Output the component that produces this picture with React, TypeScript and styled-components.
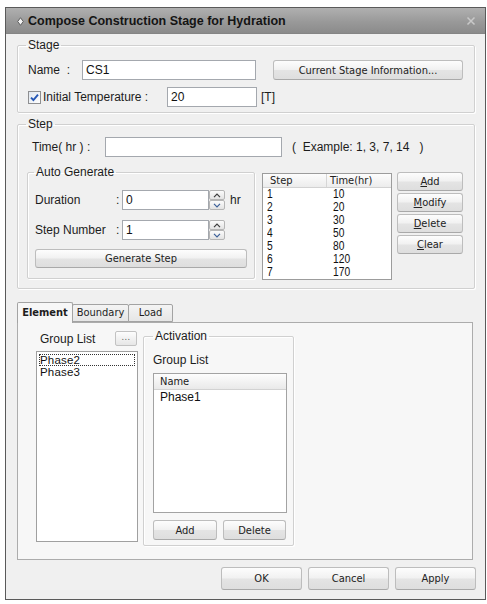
import React from "react";
import styled, { createGlobalStyle } from "styled-components";

const UI = `"DejaVu Sans Condensed", "Liberation Sans", Arial, sans-serif`;
const LABEL = `"Liberation Sans", Arial, sans-serif`;

const GlobalStyle = createGlobalStyle`
  html, body { margin: 0; padding: 0; background: #ffffff; }
  body { font-family: ${LABEL}; }
  * { box-sizing: border-box; }
`;

const Window = styled.div`
  margin: 7px 0 0 5px;
  width: 481px;
  border: 1px solid #5a5a5a;
  background: #f0f0f0;
  display: flex;
  flex-direction: column;
`;

const TitleBar = styled.div`
  height: 26px;
  display: flex;
  align-items: center;
  gap: 4px;
  padding: 1px 9px 0 11px;
  background: linear-gradient(#b0b0b0, #999999 55%, #8b8b8b);
  border-bottom: 1px solid #858585;
`;

const Title = styled.span`
  flex: 1;
  font: bold 12.5px/14px ${LABEL};
  color: #141414;
`;

const Body = styled.div`
  display: flex;
  flex-direction: column;
  padding: 4px 10px 9px 11px;
`;

const Group = styled.fieldset<{ $pad: string; $mt?: number; $w?: number; $ml?: number }>`
  margin: ${(p) => p.$mt ?? 0}px 0 0 ${(p) => p.$ml ?? 0}px;
  min-width: 0;
  flex: none;
  width: ${(p) => (p.$w ? `${p.$w}px` : "auto")};
  padding: ${(p) => p.$pad};
  border: 1px solid #d0d0d0;
  border-radius: 2px;
  box-shadow: 1px 1px 0 #ffffff, inset 1px 1px 0 #ffffff;
`;

const Legend = styled.legend`
  padding: 0 2px;
  font: 12px/14px ${LABEL};
  color: #1c1c1c;
`;

const Row = styled.div<{ $mt?: number; $ml?: number }>`
  display: flex;
  align-items: center;
  height: 20px;
  margin: ${(p) => p.$mt ?? 0}px 0 0 ${(p) => p.$ml ?? 0}px;
`;

const Label = styled.span<{ $w?: number; $ml?: number }>`
  flex: none;
  width: ${(p) => (p.$w ? `${p.$w}px` : "auto")};
  margin-left: ${(p) => p.$ml ?? 0}px;
  font: 12px/14px ${LABEL};
  color: #1c1c1c;
  white-space: pre;
`;

const TextBox = styled.input<{ $w: number }>`
  flex: none;
  width: ${(p) => p.$w}px;
  height: 20px;
  margin: 0;
  padding: 0 0 0 3px;
  border: 1px solid #a4a8ae;
  background: #ffffff;
  font: 12px ${LABEL};
  color: #111111;
  outline: none;
`;

const Button = styled.button<{ $w: number; $h?: number; $ml?: number; $mt?: number }>`
  flex: none;
  width: ${(p) => p.$w}px;
  height: ${(p) => p.$h ?? 20}px;
  margin: ${(p) => p.$mt ?? 0}px 0 0 ${(p) => p.$ml ?? 0}px;
  padding: 0;
  border: 1px solid #bdbdbd;
  border-bottom-color: #a9a9a9;
  border-radius: 3px;
  background: linear-gradient(#fdfdfd, #f1f1f1 48%, #e4e4e4 52%, #dedede);
  font: 11px ${UI};
  color: #222222;
  u { text-decoration: underline; }
`;

const AutoRow = styled.div`
  display: flex;
  align-items: flex-start;
  margin-top: 8px;
`;

const SpinBox = styled.div`
  flex: none;
  width: 16px;
  height: 20px;
  display: flex;
  flex-direction: column;
`;

const SpinHalf = styled.div`
  height: 10px;
  border: 1px solid #b5b5b5;
  border-radius: 2px;
  background: linear-gradient(#fbfbfb, #e3e3e3);
  display: flex;
  align-items: center;
  justify-content: center;
`;

const StepTable = styled.div`
  flex: none;
  margin: 8px 0 0 7px;
  width: 130px;
  height: 107px;
  border: 1px solid #9c9c9c;
  background: #ffffff;
  display: flex;
  flex-direction: column;
`;

const TableHead = styled.div`
  display: flex;
  height: 14px;
  background: linear-gradient(#fdfdfd, #ececec);
  border-bottom: 1px solid #d2d2d2;
`;

const HeadCell = styled.div<{ $w?: number; $pl: number }>`
  flex: ${(p) => (p.$w ? "none" : "1")};
  width: ${(p) => (p.$w ? `${p.$w}px` : "auto")};
  padding-left: ${(p) => p.$pl}px;
  font: 11px/13px ${UI};
  color: #222222;
  border-right: ${(p) => (p.$w ? "1px solid #d6d6d6" : "none")};
`;

const TableRow = styled.div`
  display: flex;
  height: 13px;
  color: #111111;
`;

const Cell = styled.div<{ $w?: number; $pl: number }>`
  flex: ${(p) => (p.$w ? "none" : "1")};
  width: ${(p) => (p.$w ? `${p.$w}px` : "auto")};
  height: 13px;
  padding-left: ${(p) => p.$pl}px;
`;

/* tall, narrow figures of the step grid */
const NarrowText = styled.div`
  font: 12.5px/13px ${LABEL};
  white-space: nowrap;
  transform: scale(0.82, 1);
  transform-origin: 0 50%;
`;

const SideButtons = styled.div`
  flex: none;
  margin: 7px 0 0 5px;
  display: flex;
  flex-direction: column;
  gap: 2px;
`;

const TabStrip = styled.div`
  display: flex;
  align-items: flex-end;
  height: 20px;
  margin-top: 13px;
`;

const Tab = styled.div<{ $w: number; $active?: boolean }>`
  position: relative;
  z-index: ${(p) => (p.$active ? 2 : 1)};
  flex: none;
  width: ${(p) => p.$w}px;
  height: ${(p) => (p.$active ? 21 : 18)}px;
  margin: 0 0 ${(p) => (p.$active ? -1 : 0)}px ${(p) => (p.$active ? 0 : -1)}px;
  border: 1px solid #a3a3a3;
  border-bottom: ${(p) => (p.$active ? "none" : "1px solid #a3a3a3")};
  border-radius: 2px 2px 0 0;
  background: ${(p) => (p.$active ? "#f7f7f7" : "linear-gradient(#f4f4f4, #e6e6e6)")};
  font: ${(p) => (p.$active ? "bold" : "normal")} 11px/${(p) => (p.$active ? 19 : 16)}px ${UI};
  color: #1e1e1e;
  text-align: center;
`;

const TabPanel = styled.div`
  display: flex;
  align-items: flex-start;
  gap: 5px;
  margin-right: 2px;
  padding: 6px 0 13px 18px;
  border: 1px solid #acacac;
  background: #f7f7f7;
`;

const GroupColumn = styled.div`
  flex: none;
  width: 102px;
  margin-top: 2px;
  display: flex;
  flex-direction: column;
`;

const ColumnHead = styled.div`
  display: flex;
  align-items: flex-end;
  justify-content: space-between;
  height: 15px;
`;

const MoreButton = styled.button`
  width: 22px;
  height: 15px;
  margin: 0 1px 0 0;
  padding: 0 0 3px;
  border: 1px solid #c2c2c2;
  border-radius: 2px;
  background: linear-gradient(#fdfdfd, #e6e6e6);
  font: 9px/8px ${UI};
  color: #5a5a5a;
  letter-spacing: 0.5px;
`;

const ListBox = styled.div<{ $h: number }>`
  margin-top: 5px;
  height: ${(p) => p.$h}px;
  padding: 2px 2px 0 2px;
  border: 1px solid #a0a0a0;
  background: #ffffff;
`;

const ListItem = styled.div<{ $focused?: boolean }>`
  height: 12px;
  padding-left: 1px;
  font: 11.5px/12px ${LABEL};
  letter-spacing: 0.2px;
  color: #111111;
  outline: ${(p) => (p.$focused ? "1px dotted #333333" : "none")};
  outline-offset: -1px;
`;

const GridList = styled.div`
  margin-top: 5px;
  height: 140px;
  border: 1px solid #a3a3a3;
  background: #ffffff;
  display: flex;
  flex-direction: column;
`;

const GridHead = styled.div`
  height: 16px;
  padding-left: 6px;
  background: linear-gradient(#fdfdfd, #e9e9e9);
  border-bottom: 1px solid #d2d2d2;
  font: 11px/15px ${UI};
  color: #222222;
`;

const GridItem = styled.div`
  padding: 1px 0 0 6px;
  font: 12px/13px ${LABEL};
  color: #111111;
`;

const DialogButtons = styled.div`
  display: flex;
  justify-content: flex-end;
  gap: 6px;
  margin: 7px -1px 0 0;
`;

function TitleIcon() {
  return (
    <svg width="7" height="9" viewBox="0 0 7 9">
      <path d="M3.5 0.7 L6.3 4.5 L3.5 8.3 L0.7 4.5 Z" fill="#f2f2f2" stroke="#5f5f5f" strokeWidth="1" />
    </svg>
  );
}

function CloseGlyph() {
  return (
    <svg width="10" height="10" viewBox="0 0 10 10">
      <path d="M1.5 1.5 L8.5 8.5 M8.5 1.5 L1.5 8.5" stroke="#c9c9c9" strokeWidth="1.5" />
    </svg>
  );
}

function CheckBox() {
  return (
    <svg width="13" height="13" viewBox="0 0 13 13" style={{ flex: "none" }}>
      <defs>
        <linearGradient id="cbfill" x1="0" y1="0" x2="1" y2="1">
          <stop offset="0" stopColor="#dfe6ef" />
          <stop offset="1" stopColor="#ffffff" />
        </linearGradient>
      </defs>
      <rect x="0.5" y="0.5" width="12" height="12" fill="url(#cbfill)" stroke="#8e8f91" />
      <path d="M3 6.6 L5.4 9 L10 3.6" fill="none" stroke="#2557b5" strokeWidth="1.9" />
    </svg>
  );
}

function Spinner() {
  return (
    <SpinBox>
      <SpinHalf>
        <svg width="8" height="5" viewBox="0 0 8 5">
          <path d="M1 4.2 L4 1.2 L7 4.2" fill="none" stroke="#3c3c3c" strokeWidth="1.2" />
        </svg>
      </SpinHalf>
      <SpinHalf>
        <svg width="8" height="5" viewBox="0 0 8 5">
          <path d="M1 0.8 L4 3.8 L7 0.8" fill="none" stroke="#3a5f98" strokeWidth="1.2" />
        </svg>
      </SpinHalf>
    </SpinBox>
  );
}

const steps: [string, string][] = [
  ["1", "10"],
  ["2", "20"],
  ["3", "30"],
  ["4", "50"],
  ["5", "80"],
  ["6", "120"],
  ["7", "170"],
];

export default function App() {
  return (
    <>
      <GlobalStyle />
      <Window>
        <TitleBar>
          <TitleIcon />
          <Title>Compose Construction Stage for Hydration</Title>
          <CloseGlyph />
        </TitleBar>
        <Body>
          <Group $pad="8px 10px 5px 8px">
            <Legend>Stage</Legend>
            <Row $ml={2}>
              <Label $w={54}>{"Name  :"}</Label>
              <TextBox $w={174} value="CS1" readOnly />
              <Button $w={190} $ml={17}>Current Stage Information...</Button>
            </Row>
            <Row $ml={2} $mt={7}>
              <CheckBox />
              <Label $w={124} $ml={2}>Initial Temperature :</Label>
              <TextBox $w={90} value="20" readOnly />
              <Label $ml={4}>[T]</Label>
            </Row>
          </Group>

          <Group $pad="6px 10px 8px 8px" $mt={4}>
            <Legend>Step</Legend>
            <Row $ml={6}>
              <Label $w={73}>Time( hr ) :</Label>
              <TextBox $w={177} value="" readOnly />
              <Label $ml={10}>{"(  Example: 1, 3, 7, 14   )"}</Label>
            </Row>
            <AutoRow>
              <Group $pad="11px 6px 10px 6px" $w={228} $ml={1}>
                <Legend>Auto Generate</Legend>
                <Row $ml={1}>
                  <Label $w={81}>Duration</Label>
                  <Label $w={6}>:</Label>
                  <TextBox $w={87} value="0" readOnly />
                  <Spinner />
                  <Label $ml={5}>hr</Label>
                </Row>
                <Row $ml={1} $mt={10}>
                  <Label $w={81}>Step Number</Label>
                  <Label $w={6}>:</Label>
                  <TextBox $w={87} value="1" readOnly />
                  <Spinner />
                </Row>
                <Button $w={212} $h={19} $mt={9} $ml={1}>Generate Step</Button>
              </Group>
              <StepTable>
                <TableHead>
                  <HeadCell $w={64} $pl={7}>Step</HeadCell>
                  <HeadCell $pl={3}>Time(hr)</HeadCell>
                </TableHead>
                {steps.map(([n, t]) => (
                  <TableRow key={n}>
                    <Cell $w={64} $pl={4}><NarrowText>{n}</NarrowText></Cell>
                    <Cell $pl={6}><NarrowText>{t}</NarrowText></Cell>
                  </TableRow>
                ))}
              </StepTable>
              <SideButtons>
                <Button $w={66} $h={19}><u>A</u>dd</Button>
                <Button $w={66} $h={19}><u>M</u>odify</Button>
                <Button $w={66} $h={19}><u>D</u>elete</Button>
                <Button $w={66} $h={19}><u>C</u>lear</Button>
              </SideButtons>
            </AutoRow>
          </Group>

          <TabStrip>
            <Tab $w={56} $active>Element</Tab>
            <Tab $w={57}>Boundary</Tab>
            <Tab $w={45}>Load</Tab>
          </TabStrip>
          <TabPanel>
            <GroupColumn>
              <ColumnHead>
                <Label $ml={4}>Group List</Label>
                <MoreButton>...</MoreButton>
              </ColumnHead>
              <ListBox $h={191}>
                <ListItem $focused>Phase2</ListItem>
                <ListItem>Phase3</ListItem>
              </ListBox>
            </GroupColumn>
            <Group $pad="7px 6px 5px 9px" $w={151}>
              <Legend>Activation</Legend>
              <Label>Group List</Label>
              <GridList>
                <GridHead>Name</GridHead>
                <GridItem>Phase1</GridItem>
              </GridList>
              <Row $mt={7}>
                <Button $w={64}>Add</Button>
                <Button $w={63} $ml={6}>Delete</Button>
              </Row>
            </Group>
          </TabPanel>

          <DialogButtons>
            <Button $w={81} $h={23}>OK</Button>
            <Button $w={81} $h={23}>Cancel</Button>
            <Button $w={81} $h={23}>Apply</Button>
          </DialogButtons>
        </Body>
      </Window>
    </>
  );
}
